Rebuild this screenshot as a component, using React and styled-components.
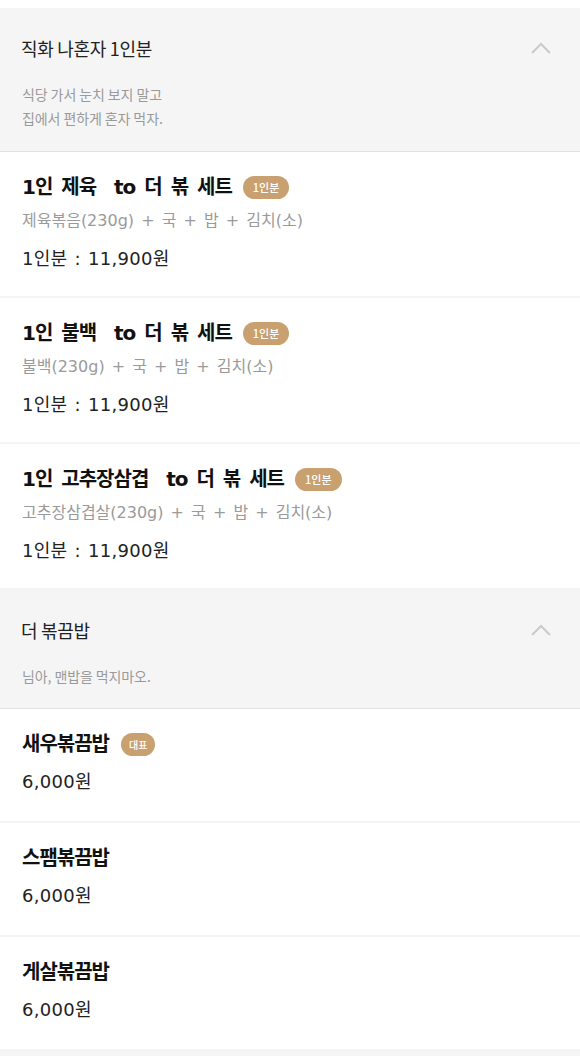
import React from "react";
import styled, { createGlobalStyle } from "styled-components";

const GlobalStyle = createGlobalStyle`
    * {
        box-sizing: border-box;
        margin: 0;
        padding: 0;
    }

    body {
        background: #fff;
        font-family: "Noto Sans CJK KR", "Noto Sans", sans-serif;
        color: #222;
    }
`;

// Latin + digits in a wide face, hangul falls back to Noto CJK
const mixed = `"DejaVu Sans", "Noto Sans CJK KR", sans-serif`;

const Page = styled.div`
    width: 580px;
    padding-top: 8px;
    background: #fff;
`;

const SectionHead = styled.div`
    display: flex;
    flex-direction: column;
    background: #f5f5f5;
    border-bottom: 1px solid #e1e1e1;
    padding: 28px 22px ${(props) => props.bottom || 21}px 21px;
`;

const HeadRow = styled.div`
    display: flex;
    align-items: center;
    justify-content: space-between;
    height: 24px;
`;

const HeadTitle = styled.h3`
    font-size: 18px;
    font-weight: 400;
    line-height: 24px;
    color: #222;
    letter-spacing: -0.3px;
`;

const Chevron = styled.svg`
    width: 22px;
    height: 14px;
    margin-right: 6px;
`;

const HeadDesc = styled.p`
    margin-top: 22px;
    padding-left: 1px;
    font-size: 14px;
    line-height: 24px;
    color: #9a9a9a;
    letter-spacing: -0.1px;
    white-space: pre-line;
`;

const Item = styled.div`
    display: flex;
    flex-direction: column;
    padding: 21px 22px ${(props) => props.bottom || 23}px 22px;
    border-bottom: 2px solid #f4f4f4;

    &:last-child {
        border-bottom: 0;
    }
`;

const TitleRow = styled.div`
    display: flex;
    align-items: center;
    height: 28px;
`;

const ItemTitle = styled.h4`
    font-family: ${mixed};
    font-size: 20px;
    font-weight: 700;
    line-height: 28px;
    letter-spacing: -1px;
    word-spacing: 3px;
    color: #111;
    white-space: pre;
`;

const Badge = styled.span`
    display: inline-flex;
    align-items: center;
    justify-content: center;
    height: 23px;
    padding: 0 ${(props) => (props.small ? 8 : 10)}px;
    margin-left: ${(props) => (props.small ? 12 : 11)}px;
    border-radius: 12px;
    background: #c9a06f;
    color: #fff;
    font-size: ${(props) => (props.small ? 10 : 11)}px;
    font-weight: 500;
`;

const ItemDesc = styled.p`
    font-family: ${mixed};
    margin-top: 8px;
    font-size: 16px;
    line-height: 24px;
    color: #9a9a9a;
    letter-spacing: 0;
    word-spacing: 2px;
`;

const Price = styled.p`
    font-family: ${mixed};
    margin-top: ${(props) => props.gap || 12}px;
    font-size: 18px;
    line-height: 28px;
    color: #222;
    letter-spacing: 0.3px;
    word-spacing: 1px;
`;

const Footer = styled.div`
    height: 8px;
    background: #f5f5f5;
`;

const sets = [
    {
        title: "1인 제육  to 더 볶 세트",
        desc: "제육볶음(230g) + 국 + 밥 + 김치(소)",
    },
    {
        title: "1인 불백  to 더 볶 세트",
        desc: "불백(230g) + 국 + 밥 + 김치(소)",
    },
    {
        title: "1인 고추장삼겹  to 더 볶 세트",
        desc: "고추장삼겹살(230g) + 국 + 밥 + 김치(소)",
    },
];

const rice = [
    { title: "새우볶끔밥", badge: "대표" },
    { title: "스팸볶끔밥" },
    { title: "게살볶끔밥" },
];

function ChevronUp() {
    return (
        <Chevron viewBox="0 0 22 14">
            <polyline
                points="2,12 11,3 20,12"
                fill="none"
                stroke="#cacaca"
                strokeWidth="2"
            />
        </Chevron>
    );
}

function Header({ title, desc, bottom }) {
    return (
        <SectionHead bottom={bottom}>
            <HeadRow>
                <HeadTitle>{title}</HeadTitle>
                <ChevronUp />
            </HeadRow>
            <HeadDesc>{desc}</HeadDesc>
        </SectionHead>
    );
}

export default function App() {
    return (
        <Page>
            <GlobalStyle />
            <Header
                title="직화 나혼자 1인분"
                desc={"식당 가서 눈치 보지 말고\n집에서 편하게 혼자 먹자."}
            />
            {sets.map((set) => (
                <Item key={set.title}>
                    <TitleRow>
                        <ItemTitle>{set.title}</ItemTitle>
                        <Badge>1인분</Badge>
                    </TitleRow>
                    <ItemDesc>{set.desc}</ItemDesc>
                    <Price>1인분 : 11,900원</Price>
                </Item>
            ))}
            <Header title="더 볶끔밥" desc="님아, 맨밥을 먹지마오." bottom={20} />
            {rice.map((item) => (
                <Item key={item.title} bottom={25}>
                    <TitleRow>
                        <ItemTitle>{item.title}</ItemTitle>
                        {item.badge && <Badge small>{item.badge}</Badge>}
                    </TitleRow>
                    <Price gap={10}>6,000원</Price>
                </Item>
            ))}
            <Footer />
        </Page>
    );
}
